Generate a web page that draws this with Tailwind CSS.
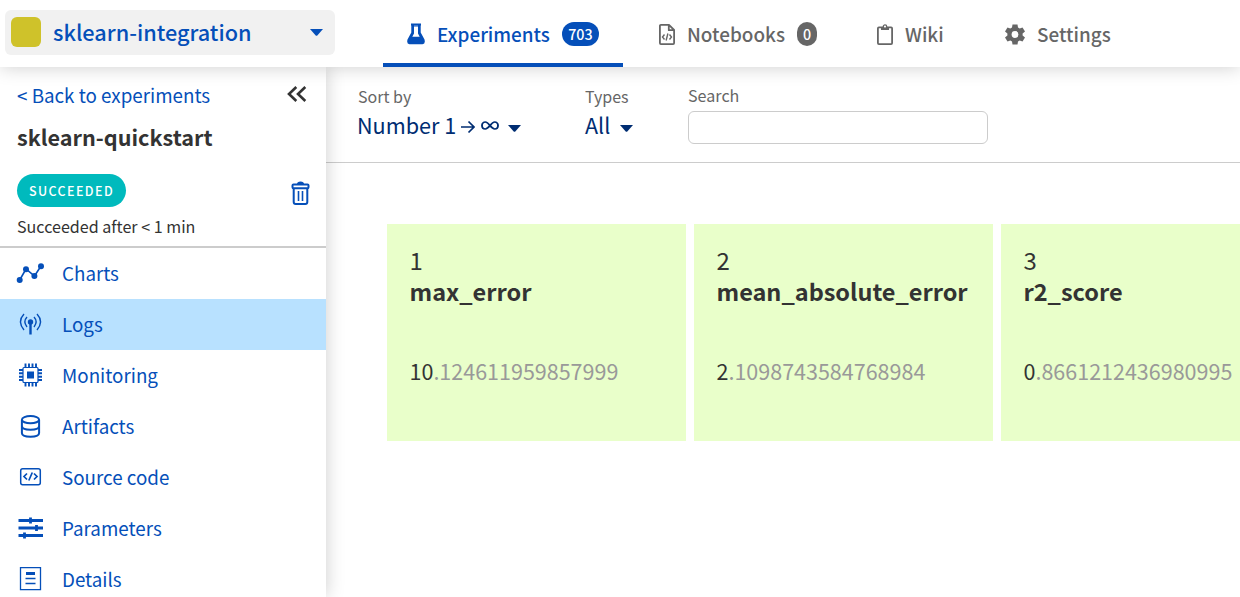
<!DOCTYPE html>
<html lang="en">
<head>
<meta charset="utf-8">
<title>sklearn-integration</title>
<script src="https://cdn.jsdelivr.net/npm/@tailwindcss/browser@4"></script>
</head>
<body class="flex h-[597px] w-[1240px] flex-col overflow-hidden bg-white font-['Noto_Sans_CJK_SC','Noto_Sans',sans-serif] whitespace-nowrap text-[#333]">
<header class="relative z-20 flex h-[67px] shrink-0 bg-white shadow-[0_0_18px_rgba(0,0,0,0.2)]">
  <button class="mt-[10px] ml-[5px] flex h-[45px] w-[330px] items-center rounded-md bg-[#f1f1f1] pr-3 pl-[6px] text-[#054fb9]">
    <span class="size-[30px] -translate-y-px rounded-md bg-[#cfc22a]"></span>
    <span class="mb-0.5 ml-3 text-[21.7px] leading-[30px] font-medium">sklearn-integration</span>
    <svg class="ml-auto" width="13" height="7" viewBox="0 0 13 7" fill="currentColor"><path d="M0 0h13L7.3 6.4q-.8.8-1.6 0z"/></svg>
  </button>
  <nav class="ml-12 flex text-[18.9px] leading-[30px] font-medium text-[#666]">
    <a class="flex w-[240px] items-center border-b-4 border-[#054fb9] pt-1 pl-6 text-[#054fb9]">
      <svg width="18" height="22" viewBox="0 0 18 22" fill="none"><path d="M4.300 2v7.500L.5 16.400Q-.7 20.800 2.500 21.300h13q3.200-.5 2-4.900L13.700 9.500V2z" fill="currentColor"/><path d="M4 1.500h10" stroke="currentColor" stroke-width="2"/><path d="M7 2.500v8L5.300 13.800h7.400L11 10.500v-8z" fill="#fff"/><path d="M7 2.500h4l.3 1H6.700z" fill="currentColor"/></svg>
      <span class="ml-3">Experiments</span>
      <span class="ml-3 flex h-6 w-[37px] items-center justify-center rounded-full bg-[#054fb9] text-[14.3px] text-white">703</span>
    </a>
    <a class="flex w-[218px] items-center pl-9">
      <svg class="translate-y-px" width="16" height="21" viewBox="0 0 16 21" fill="none" stroke="currentColor" stroke-width="1.8"><path d="M1.900.900H10L15.100 6v13.100a1 1 0 0 1-1 1H1.900a1 1 0 0 1-1-1V1.900a1 1 0 0 1 1-1zM9.800 1v5.200H15" stroke-linejoin="round"/><path d="M5.500 10.500 3.500 13l2 2.500M10.500 10.500l2 2.500-2 2.500M8.900 9.500l-1.800 7" stroke-width="1.400"/></svg>
      <span class="mt-px ml-3">Notebooks</span>
      <span class="ml-3 flex h-6 w-5 items-center justify-center rounded-full bg-[#666] text-[14.3px] text-white">0</span>
    </a>
    <a class="flex w-[128px] items-center pl-9">
      <svg class="translate-y-px" width="16" height="21" viewBox="0 0 16 21" fill="none" stroke="currentColor" stroke-width="1.800"><rect x=".9" y="3.400" width="14.200" height="16.700" rx="1"/><path d="M4 3h8v3H4z" fill="currentColor" stroke="none"/><circle cx="8" cy="2.600" r="1.700" fill="#fff" stroke-width="1.300"/></svg>
      <span class="mt-px ml-3">Wiki</span>
    </a>
    <a class="flex items-center pl-9">
      <svg class="translate-y-px" width="20" height="21" viewBox="0 0 20 21" fill="none"><path d="M7.500.500h5l.5 3 1.700 1 2.800-1.100 2.500 4.200-2.400 1.900v2l2.400 1.900-2.500 4.200-2.800-1.100-1.700 1-.5 3h-5l-.5-3-1.700-1-2.800 1.100L0 13.400l2.400-1.900v-2L0 7.600l2.500-4.200 2.800 1.100 1.700-1z" fill="currentColor"/><circle cx="10" cy="10.500" r="3.400" fill="#fff"/></svg>
      <span class="mt-px ml-3">Settings</span>
    </a>
  </nav>
</header>
<div class="flex min-h-0 flex-1">
  <aside class="z-10 w-[326px] shrink-0 bg-white shadow-[0_0_18px_rgba(0,0,0,0.2)]">
    <div class="flex h-[181px] flex-col border-b-2 border-[#ccc] pr-4 pl-[17px]">
      <div class="mt-3 flex h-8 items-center justify-between">
        <a class="text-[18.8px] leading-8 text-[#054fb9]">&lt; Back to experiments</a>
        <svg class="mr-[3px] -translate-y-px" width="20" height="16" viewBox="0 0 20 16" fill="none" stroke="#333" stroke-width="2.600"><path d="M9.300 1 2 8l7.300 7M18.300 1 11 8l7.300 7"/></svg>
      </div>
      <h1 class="mt-[10px] text-[21.6px] leading-8 font-bold">sklearn-quickstart</h1>
      <div class="mt-[21px] flex h-[33px] items-center justify-between">
        <span class="flex h-[33px] w-[109px] items-center justify-center rounded-full bg-[#00babd] pt-px text-[12.500px] font-medium tracking-[1.400px] text-white">SUCCEEDED</span>
        <svg class="translate-y-[2px]" width="19" height="24" viewBox="0 0 19 24" fill="none" stroke="#054fb9" stroke-width="2"><path d="M2.700 7v14q0 2 2 2h9.600q2 0 2-2V7"/><rect x="1.500" y="3.500" width="16" height="3.800" rx="1"/><path d="M6 3q0-2.500 3.500-2.500T13 3z" fill="#054fb9" stroke="none"/><path d="M7.500 10v10M11.500 10v10" stroke-width="1.600"/></svg>
      </div>
      <p class="mt-[7px] text-[16.100px] leading-6">Succeeded after &lt; 1 min</p>
    </div>
    <nav class="text-[18.800px] leading-[30px] text-[#054fb9]">
      <a class="flex h-[51px] items-center gap-[17px] pl-4"><svg width="29" height="28" viewBox="0 0 29 28" fill="currentColor"><path d="M3.700 20 10 9l8.500 7L25 6" fill="none" stroke="currentColor" stroke-width="1.600"/><circle cx="3.700" cy="20" r="3"/><circle cx="10" cy="9.200" r="3"/><circle cx="18.400" cy="16" r="3"/><circle cx="25" cy="6.200" r="3"/></svg><span class="mb-0.5">Charts</span></a>
      <a class="flex h-[51px] items-center gap-[17px] bg-[#b8e1ff] pl-4"><svg width="29" height="28" viewBox="0 0 29 28" fill="none" stroke="currentColor" stroke-width="1.400"><circle cx="14.500" cy="11" r="2.700" fill="currentColor" stroke="none"/><path d="M14.500 11.500v12" stroke-width="2.400"/><path d="M11 6q-4.200 4.500 0 10M18 6q4.200 4.500 0 10M8 3q-7 7.500 0 16M21 3q7 7.500 0 16"/></svg><span class="mb-0.5">Logs</span></a>
      <a class="flex h-[51px] items-center gap-[17px] pl-4"><svg width="29" height="28" viewBox="0 0 29 28" fill="none" stroke="currentColor"><rect x="7" y="5.500" width="15" height="15" rx="1" stroke-width="1.200"/><path d="M11 9.500h7v7h-7z" fill="currentColor" stroke="none"/><path d="M9.500 1.500v4M13 1.500v4M16.500 1.500v4M20 1.500v4M9.500 20.500v4M13 20.500v4M16.500 20.500v4M20 20.500v4M3 8h4M3 11.300h4M3 14.700h4M3 18h4M22 8h4M22 11.300h4M22 14.700h4M22 18h4" stroke-width="1.900"/></svg><span class="mb-0.5">Monitoring</span></a>
      <a class="flex h-[51px] items-center gap-[17px] pl-4"><svg width="29" height="28" viewBox="0 0 29 28" fill="none" stroke="currentColor" stroke-width="2"><ellipse cx="14.500" cy="6.700" rx="8.600" ry="3.600"/><path d="M5.900 7v13c0 5 17.200 5 17.200 0V7M5.900 13c0 5 17.200 5 17.200 0"/></svg><span class="mb-0.5">Artifacts</span></a>
      <a class="flex h-[51px] items-center gap-[17px] pl-4"><svg width="29" height="28" viewBox="0 0 29 28" fill="none" stroke="currentColor" stroke-width="1.500"><rect x="4.700" y="4.700" width="19.600" height="16" rx="2"/><path d="m11 9.500-3 3 3 3M18 9.500l3 3-3 3M16.300 8.500l-3.500 8" stroke-width="1.700"/></svg><span class="mb-0.5">Source code</span></a>
      <a class="flex h-[51px] items-center gap-[17px] pl-4"><svg width="29" height="28" viewBox="0 0 29 28" fill="none" stroke="currentColor" stroke-width="2.800"><path d="M2.500 5.500H27M2.500 13H27M2.500 20.500H27M14.500 2.500v6M20.500 10v6M8.500 17.500v6"/></svg><span class="mb-0.5">Parameters</span></a>
      <a class="flex h-[51px] items-center gap-[17px] pl-4"><svg width="29" height="28" viewBox="0 0 29 28" fill="none" stroke="currentColor" stroke-width="1.300"><path d="M4.500 1.600h20v22h-20z"/><path d="M10 7.500h9" stroke-width="3"/><path d="M9.500 12.500h10M9.500 17.500h10" stroke-width="1.400"/></svg><span class="mb-0.5">Details</span></a>
    </nav>
  </aside>
  <main class="min-w-0 flex-1">
    <div class="flex h-24 border-b border-[#ccc] pt-[17px] pl-8">
      <div class="w-[227px]">
        <div class="text-[16px] leading-6 text-[#666]">Sort by</div>
        <div class="-ml-px flex h-[34px] items-center text-[21.600px] leading-8 text-[#002d72]">Number 1
          <svg class="mt-1 ml-[5px]" width="14" height="14" viewBox="0 0 14 14" fill="none" stroke="currentColor" stroke-width="1.700"><path d="M0 7h12.500M7.500 1.500 13 7l-5.500 5.500"/></svg>
          <svg class="ml-1.5" width="18" height="9" viewBox="0 0 18 11" preserveAspectRatio="none" fill="none" stroke="currentColor" stroke-width="1.900"><path d="M9 5.500C7 2.500 6 1.300 4.300 1.300S1 3 1 5.500s1.500 4.200 3.300 4.200S7 8.500 9 5.500s3-4.200 4.700-4.200S17 3 17 5.500s-1.500 4.200-3.300 4.200S11 8.500 9 5.500z"/></svg>
          <svg class="mt-1.5 ml-[9px]" width="13" height="7" viewBox="0 0 13 7" fill="currentColor"><path d="M0 0h13L7.300 6.400q-.8.8-1.600 0z"/></svg>
        </div>
      </div>
      <div class="w-[103px]">
        <div class="text-[16px] leading-6 text-[#666]">Types</div>
        <div class="flex h-[34px] items-center text-[21.500px] leading-8 text-[#002d72]">All
          <svg class="mt-1.5 ml-[9.500px]" width="13" height="7" viewBox="0 0 13 7" fill="currentColor"><path d="M0 0h13L7.300 6.400q-.8.8-1.600 0z"/></svg>
        </div>
      </div>
      <div class="-mt-px">
        <div class="text-[16.100px] leading-6 text-[#666]">Search</div>
        <input class="mt-1 block h-[33px] w-[300px] rounded-md border border-[#ccc] bg-white">
      </div>
    </div>
    <div class="flex gap-2 pt-[61px] pl-[61px]">
      <section class="h-[217px] w-[299px] shrink-0 bg-[#e9ffca] pt-5 pl-[22.500px]">
        <div class="text-[24px] leading-8">1</div>
        <h2 class="text-[23.500px] leading-[30px] font-bold">max_error</h2>
        <p class="mt-[49px] text-[21.500px] leading-8 text-[#999]"><span class="text-[#333]">10</span>.124611959857999</p>
      </section>
      <section class="h-[217px] w-[299px] shrink-0 bg-[#e9ffca] pt-5 pl-[22.500px]">
        <div class="text-[24px] leading-8">2</div>
        <h2 class="text-[23.500px] leading-[30px] font-bold">mean_absolute_error</h2>
        <p class="mt-[49px] text-[21.500px] leading-8 text-[#999]"><span class="text-[#333]">2</span>.1098743584768984</p>
      </section>
      <section class="h-[217px] w-[299px] shrink-0 bg-[#e9ffca] pt-5 pl-[22.500px]">
        <div class="text-[24px] leading-8">3</div>
        <h2 class="text-[23.500px] leading-[30px] font-bold">r2_score</h2>
        <p class="mt-[49px] text-[21.500px] leading-8 text-[#999]"><span class="text-[#333]">0</span>.8661212436980995</p>
      </section>
    </div>
  </main>
</div>
</body>
</html>
